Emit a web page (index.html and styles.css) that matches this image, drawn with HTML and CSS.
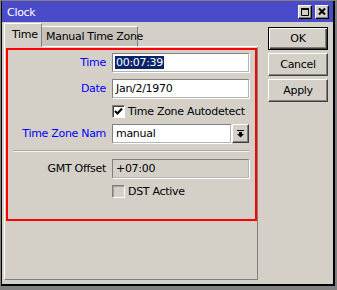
FILE: index.html
```html
<!DOCTYPE html>
<html lang="en">
<head>
  <meta charset="UTF-8">
  <title>Clock</title>
  <link rel="stylesheet" href="styles.css">
</head>
<body>
  <div class="window">
    <div class="titlebar">
      <span class="title">Clock</span>
      <div class="title-buttons">
        <span class="tbtn">
          <svg width="8" height="8" viewBox="0 0 8 8"><path d="M0.5 1.5h7v6h-7z" fill="none" stroke="#000"/><rect x="0" y="0" width="8" height="2" fill="#000"/></svg>
        </span>
        <span class="tbtn">
          <svg width="8" height="7" viewBox="0 0 8 7"><path d="M1 0.5l6 6M7 0.5l-6 6" stroke="#000" stroke-width="2"/></svg>
        </span>
      </div>
    </div>

    <div class="content">
      <div class="main">
        <div class="tabs">
          <div class="tab active">Time</div>
          <div class="tab">Manual Time Zone</div>
          <div class="tab-fill"></div>
        </div>

        <div class="panel">
          <div class="frame">
            <div class="form">
              <span class="label blue">Time</span>
              <div class="input"><span class="selected">00:07:39</span></div>

              <span class="label blue">Date</span>
              <div class="input">Jan/2/1970</div>

              <div class="check-row">
                <span class="checkbox checked">
                  <svg width="9" height="9" viewBox="0 0 9 9"><path d="M1 4l2.5 2.5L8 1.5" fill="none" stroke="#000" stroke-width="2"/></svg>
                </span>
                <span>Time Zone Autodetect</span>
              </div>

              <span class="label blue">Time Zone Nam</span>
              <div class="combo">
                <div class="input">manual</div>
                <span class="drop">
                  <svg width="7" height="8" viewBox="0 0 7 8"><rect x="0" y="0" width="7" height="1"/><rect x="2" y="2" width="3" height="2"/><path d="M0 4h7L3.5 7.5z"/></svg>
                </span>
              </div>

              <div class="separator"></div>

              <span class="label">GMT Offset</span>
              <div class="input readonly">+07:00</div>

              <div class="check-row">
                <span class="checkbox disabled"></span>
                <span>DST Active</span>
              </div>
            </div>
          </div>
        </div>
      </div>

      <div class="buttons">
        <button class="btn default">OK</button>
        <button class="btn">Cancel</button>
        <button class="btn">Apply</button>
      </div>
    </div>
  </div>
</body>
</html>
```

FILE: styles.css
```css
body {
  margin: 0;
  background-color: #808080;
  font-family: "DejaVu Sans", sans-serif;
  font-size: 11px;
  letter-spacing: -0.3px;
  color: #000;
}

.window {
  margin: 1px 0 0 1px;
  width: 331px;
  height: 283px;
  border-left: 1px solid #000;
  border-right: 2px solid #000;
  border-bottom: 2px solid #000;
  background-color: #d4d0c8;
  display: flex;
  flex-direction: column;
}

.titlebar {
  height: 21px;
  background-color: #4a4bc9;
  color: #fff;
  display: flex;
  align-items: center;
  justify-content: space-between;
  padding: 0 4px 0 5px;
}

.title {
  margin-top: 2px;
}

.title-buttons {
  display: flex;
  gap: 3px;
}

.tbtn {
  width: 14px;
  height: 14px;
  box-sizing: border-box;
  border: 1px solid;
  border-color: #fff #000 #000 #fff;
  box-shadow: inset -1px -1px #808080;
  background-color: #d4d0c8;
  display: flex;
  align-items: center;
  justify-content: center;
}

.content {
  flex: 1;
  display: flex;
  padding: 1px 0 0 2px;
}

.main {
  width: 254px;
}

.tabs {
  display: flex;
  align-items: flex-end;
  height: 24px;
}

.tab {
  box-sizing: border-box;
  white-space: nowrap;
}

.tab.active {
  width: 38px;
  height: 24px;
  border-left: 1px solid #fff;
  border-top: 1px solid #fff;
  border-right: 1px solid #808080;
  padding: 4px 0 0 7px;
}

.tab:not(.active) {
  width: 96px;
  height: 21px;
  border-top: 1px solid #fff;
  border-right: 1px solid #808080;
  border-bottom: 1px solid #fff;
  background-color: #c6c2ba;
  padding: 3px 0 0 4px;
}

.tab-fill {
  flex: 1;
  border-bottom: 1px solid #fff;
}

.panel {
  height: 233px;
  box-sizing: border-box;
  border-left: 1px solid #fff;
  border-right: 1px solid #808080;
  border-bottom: 1px solid #808080;
  padding: 1px 0 0 1px;
}

.frame {
  width: 251px;
  height: 173px;
  box-sizing: border-box;
  border: 2px solid #ff0000;
  padding-top: 3px;
}

.form {
  display: grid;
  grid-template-columns: 98px 137px;
  column-gap: 6px;
  row-gap: 7px;
  align-items: center;
}

.label {
  text-align: right;
  white-space: nowrap;
}

.blue {
  color: #0000ff;
}

.input {
  height: 19px;
  box-sizing: border-box;
  border: 1px solid;
  border-color: #808080 #b4b4b4 #b4b4b4 #808080;
  box-shadow: 1px 1px 0 #fff;
  background-color: #fff;
  padding-left: 3px;
  display: flex;
  align-items: center;
  white-space: nowrap;
}

.input.readonly {
  background-color: #d4d0c8;
}

.selected {
  background-color: #0a246a;
  color: #fff;
  margin-left: -1px;
  padding: 0 1px;
}

.check-row {
  grid-column: 2;
  display: flex;
  align-items: center;
  gap: 3px;
  height: 12px;
  margin-left: 0;
}

.checkbox {
  width: 13px;
  height: 13px;
  box-sizing: border-box;
  border: 1px solid;
  border-color: #808080 #fff #fff #808080;
  box-shadow: inset 1px 1px #404040;
  display: flex;
  align-items: center;
  justify-content: center;
}

.checkbox.checked {
  background-color: #fff;
}

.checkbox.disabled {
  background-color: #d4d0c8;
  box-shadow: inset 1px 1px #a0a0a0;
}

.combo {
  display: flex;
  gap: 1px;
}

.combo .input {
  width: 119px;
}

.drop {
  width: 17px;
  height: 19px;
  box-sizing: border-box;
  border: 1px solid;
  border-color: #fff #404040 #404040 #fff;
  box-shadow: inset -1px -1px #808080;
  display: flex;
  align-items: center;
  justify-content: center;
}

.separator {
  grid-column: 1 / -1;
  margin-left: 5px;
  height: 2px;
  box-sizing: border-box;
  border-top: 1px solid #aca899;
  border-bottom: 1px solid #f4f2ee;
}

.buttons {
  display: flex;
  flex-direction: column;
  gap: 3px;
  width: 60px;
  margin-left: 10px;
  padding-top: 4px;
}

.btn {
  height: 23px;
  box-sizing: border-box;
  border: 1px solid;
  border-color: #fff #404040 #404040 #fff;
  box-shadow: inset -1px -1px #808080;
  background-color: #d4d0c8;
  font-family: "DejaVu Sans", sans-serif;
  font-size: 11px;
  letter-spacing: -0.3px;
  color: #000;
  padding: 0;
}

.btn.default {
  border: 1px solid #000;
  box-shadow: inset 1px 1px #fff, inset -1px -1px #404040, inset -2px -2px #808080;
}
```
